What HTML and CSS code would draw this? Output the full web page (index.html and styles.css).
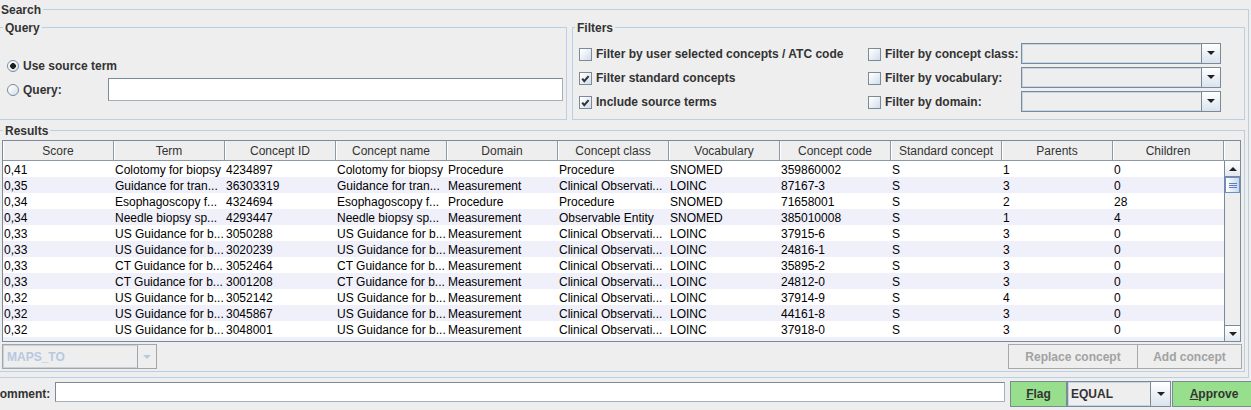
FILE: index.html
```html
<!DOCTYPE html>
<html>
<head>
<meta charset="utf-8">
<title>Search</title>
<link rel="stylesheet" href="styles.css">
</head>
<body>
<div class="search titled">
  <span class="title">Search</span>
  <div class="top-row">
    <div class="query titled">
      <span class="title">Query</span>
      <div class="query-grid">
        <div class="opt"><span class="radio on"></span>Use source term</div>
        <div></div>
        <div class="opt"><span class="radio"></span>Query:</div>
        <div class="textfield"></div>
      </div>
    </div>
    <div class="filters titled">
      <span class="title">Filters</span>
      <div class="filter-grid">
        <div class="opt"><span class="check"></span>Filter by user selected concepts / ATC code</div>
        <div class="opt"><span class="check"></span>Filter by concept class:</div>
        <div class="combo"><div class="combo-field"></div><div class="combo-btn"><i class="tri"></i></div></div>

        <div class="opt"><span class="check"><svg viewBox="0 0 11 11" width="11" height="11"><path d="M2.2 5.6 L4.3 8.2 L8.6 3.2" fill="none" stroke="#333" stroke-width="2"/></svg></span>Filter standard concepts</div>
        <div class="opt"><span class="check"></span>Filter by vocabulary:</div>
        <div class="combo"><div class="combo-field"></div><div class="combo-btn"><i class="tri"></i></div></div>

        <div class="opt"><span class="check"><svg viewBox="0 0 11 11" width="11" height="11"><path d="M2.2 5.6 L4.3 8.2 L8.6 3.2" fill="none" stroke="#333" stroke-width="2"/></svg></span>Include source terms</div>
        <div class="opt"><span class="check"></span>Filter by domain:</div>
        <div class="combo"><div class="combo-field"></div><div class="combo-btn"><i class="tri"></i></div></div>
      </div>
    </div>
  </div>

  <div class="results titled">
    <span class="title">Results</span>
    <div class="table">
      <div class="thead">
        <div class="th">Score</div><div class="th">Term</div><div class="th">Concept ID</div><div class="th">Concept name</div><div class="th">Domain</div><div class="th">Concept class</div><div class="th">Vocabulary</div><div class="th">Concept code</div><div class="th">Standard concept</div><div class="th">Parents</div><div class="th">Children</div><div class="th corner"></div>
      </div>
      <div class="tbody">
        <div class="rows">
          <div class="row"><span>0,41</span><span>Colotomy for biopsy</span><span>4234897</span><span>Colotomy for biopsy</span><span>Procedure</span><span>Procedure</span><span>SNOMED</span><span>359860002</span><span>S</span><span>1</span><span>0</span></div>
          <div class="row"><span>0,35</span><span>Guidance for tran...</span><span>36303319</span><span>Guidance for tran...</span><span>Measurement</span><span>Clinical Observati...</span><span>LOINC</span><span>87167-3</span><span>S</span><span>3</span><span>0</span></div>
          <div class="row"><span>0,34</span><span>Esophagoscopy f...</span><span>4324694</span><span>Esophagoscopy f...</span><span>Procedure</span><span>Procedure</span><span>SNOMED</span><span>71658001</span><span>S</span><span>2</span><span>28</span></div>
          <div class="row"><span>0,34</span><span>Needle biopsy sp...</span><span>4293447</span><span>Needle biopsy sp...</span><span>Measurement</span><span>Observable Entity</span><span>SNOMED</span><span>385010008</span><span>S</span><span>1</span><span>4</span></div>
          <div class="row"><span>0,33</span><span>US Guidance for b...</span><span>3050288</span><span>US Guidance for b...</span><span>Measurement</span><span>Clinical Observati...</span><span>LOINC</span><span>37915-6</span><span>S</span><span>3</span><span>0</span></div>
          <div class="row"><span>0,33</span><span>US Guidance for b...</span><span>3020239</span><span>US Guidance for b...</span><span>Measurement</span><span>Clinical Observati...</span><span>LOINC</span><span>24816-1</span><span>S</span><span>3</span><span>0</span></div>
          <div class="row"><span>0,33</span><span>CT Guidance for b...</span><span>3052464</span><span>CT Guidance for b...</span><span>Measurement</span><span>Clinical Observati...</span><span>LOINC</span><span>35895-2</span><span>S</span><span>3</span><span>0</span></div>
          <div class="row"><span>0,33</span><span>CT Guidance for b...</span><span>3001208</span><span>CT Guidance for b...</span><span>Measurement</span><span>Clinical Observati...</span><span>LOINC</span><span>24812-0</span><span>S</span><span>3</span><span>0</span></div>
          <div class="row"><span>0,32</span><span>US Guidance for b...</span><span>3052142</span><span>US Guidance for b...</span><span>Measurement</span><span>Clinical Observati...</span><span>LOINC</span><span>37914-9</span><span>S</span><span>4</span><span>0</span></div>
          <div class="row"><span>0,32</span><span>US Guidance for b...</span><span>3045867</span><span>US Guidance for b...</span><span>Measurement</span><span>Clinical Observati...</span><span>LOINC</span><span>44161-8</span><span>S</span><span>3</span><span>0</span></div>
          <div class="row"><span>0,32</span><span>US Guidance for b...</span><span>3048001</span><span>US Guidance for b...</span><span>Measurement</span><span>Clinical Observati...</span><span>LOINC</span><span>37918-0</span><span>S</span><span>3</span><span>0</span></div>
          <div class="row partial"></div>
        </div>
        <div class="vscroll">
          <div class="sb-btn up"><i class="tri-up"></i></div>
          <div class="sb-thumb"><i></i><i></i><i></i></div>
          <div class="sb-track"></div>
          <div class="sb-btn down"><i class="tri"></i></div>
        </div>
      </div>
    </div>
    <div class="controls">
      <div class="combo disabled"><div class="combo-field">MAPS_TO</div><div class="combo-btn"><i class="tri"></i></div></div>
      <div class="spacer"></div>
      <div class="btn disabled replace">Replace concept</div>
      <div class="btn disabled add">Add concept</div>
    </div>
  </div>
</div>

<div class="bottom">
  <span class="label">Comment:</span>
  <div class="textfield comment"></div>
  <div class="btn green flag"><u>F</u>lag</div>
  <div class="combo equal"><div class="combo-field">EQUAL</div><div class="combo-btn"><i class="tri"></i></div></div>
  <div class="btn green approve"><u>A</u>pprove</div>
</div>
</body>
</html>
```

FILE: styles.css
```css
* { box-sizing: border-box; }

html, body { margin: 0; padding: 0; }

body {
  width: 1251px;
  height: 410px;
  overflow: hidden;
  background: #eeeeee;
  font-family: "Liberation Sans", Arial, sans-serif;
  font-size: 12px;
  color: #333333;
}

/* titled borders */
.titled {
  position: relative;
  border: 1px solid #b8cfe5;
}
.titled > .title {
  position: absolute;
  top: -8px;
  left: 3px;
  padding: 0 2px;
  background: #eeeeee;
  font-weight: bold;
  line-height: 16px;
  color: #333333;
  white-space: nowrap;
}

.search {
  margin: 9px 2px 0 -4px;
  padding: 17px 3px 5px 2px;
}
.search > .title { left: 2px; }

.top-row {
  display: flex;
  gap: 5px;
  height: 93px;
}
.query { width: 568px; }
.filters { flex: 1; }
.filters > .title { left: 2px; }

.opt {
  display: flex;
  align-items: center;
  gap: 4px;
  font-weight: bold;
  white-space: nowrap;
}

.query-grid {
  display: grid;
  grid-template-columns: 101px 1fr;
  grid-auto-rows: 24px;
  align-items: center;
  padding: 26px 3px 0 7px;
}
.query-grid .textfield { margin-top: -2px; }

.filter-grid {
  display: grid;
  grid-template-columns: 289px 153px 200px;
  grid-auto-rows: 24px;
  align-items: center;
  padding: 14px 0 0 6px;
}
.filter-grid .combo { margin-top: -2px; }

.radio {
  width: 12px;
  height: 12px;
  border-radius: 50%;
  border: 1px solid #7a8a99;
  background: linear-gradient(135deg, #ffffff 10%, #d7e2ee 90%);
  flex: none;
}
.radio.on {
  background: radial-gradient(circle, #1e1e1e 0 2.6px, transparent 3.1px), linear-gradient(135deg, #ffffff 10%, #d7e2ee 90%);
}

.check {
  width: 13px;
  height: 13px;
  border: 1px solid #7a8a99;
  background: linear-gradient(135deg, #ffffff 10%, #d5e0ed 90%);
  flex: none;
  display: block;
}
.check svg { display: block; }

.textfield {
  height: 23px;
  background: #ffffff;
  border: 1px solid #7a8a99;
  border-right-color: #a6b0bb;
  border-bottom-color: #a6b0bb;
}

/* combo boxes */
.combo {
  display: flex;
  height: 21px;
  border: 1px solid #7a8a99;
  background: #eeeeee;
}
.combo-field {
  flex: 1;
  border: 1px solid #c4d4e4;
  border-right-color: #eeeeee;
  padding: 1px 2px 0;
  display: flex;
  align-items: center;
  font-weight: bold;
  color: #333333;
  white-space: nowrap;
}
.combo-btn {
  width: 19px;
  flex: none;
  border-left: 1px solid #7a8a99;
  background: linear-gradient(#ffffff, #d9e3ee);
  display: flex;
  align-items: center;
  justify-content: center;
}
.tri {
  display: block;
  width: 0;
  height: 0;
  border-left: 4px solid transparent;
  border-right: 4px solid transparent;
  border-top: 4px solid #222222;
}
.tri-up {
  display: block;
  width: 0;
  height: 0;
  border-left: 4px solid transparent;
  border-right: 4px solid transparent;
  border-bottom: 4px solid #222222;
}

/* results */
.results {
  margin-top: 10px;
  height: 242px;
  padding: 9px 3px 2px 2px;
}

.table {
  width: 1239px;
  height: 202px;
  border: 1px solid #7a8a99;
  background: #ffffff;
  display: flex;
  flex-direction: column;
  overflow: hidden;
}
.thead {
  display: flex;
  height: 20px;
  flex: none;
}
.th {
  width: 111px;
  flex: none;
  height: 20px;
  line-height: 19px;
  padding-top: 1px;
  text-align: center;
  background: #eeeeee;
  border-right: 1px solid #8c99a6;
  border-bottom: 1px solid #8c99a6;
  box-shadow: inset 1px 0 #ffffff;
  color: #333333;
  white-space: nowrap;
  overflow: hidden;
}
.th.corner {
  width: 16px;
  border-right: none;
}

.tbody {
  display: flex;
  height: 180px;
  flex: none;
  overflow: hidden;
}
.rows {
  width: 1221px;
  height: 180px;
  flex: none;
  overflow: hidden;
}
.row {
  display: grid;
  grid-template-columns: repeat(11, 111px);
  height: 16px;
  line-height: 16px;
  color: #000000;
  background: #ffffff;
}
.row:nth-child(even) { background: #f0f0fa; }
.row span {
  padding: 1px 0 0 1px;
  white-space: nowrap;
  overflow: hidden;
}

.vscroll {
  width: 16px;
  flex: none;
  display: flex;
  flex-direction: column;
  background: #eeeeee;
  border-left: 1px solid #7a8a99;
}
.sb-btn {
  height: 16px;
  flex: none;
  background: linear-gradient(#ffffff, #e2e9f1);
  display: flex;
  align-items: center;
  justify-content: center;
}
.sb-btn.up { border-bottom: 1px solid #7a8a99; }
.sb-btn.down { border-top: 1px solid #7a8a99; }
.sb-thumb {
  height: 16px;
  flex: none;
  border: 1px solid #6e8fc6;
  background: linear-gradient(90deg, #ffffff, #c6d8ee);
  display: flex;
  flex-direction: column;
  align-items: center;
  justify-content: center;
  gap: 1px;
}
.sb-thumb i {
  display: block;
  width: 8px;
  height: 1px;
  background: #5b7fc0;
}
.sb-track { flex: 1; }

.controls {
  display: flex;
  margin-top: 2px;
  height: 25px;
}
.controls .combo {
  width: 155px;
  height: 25px;
}
.combo.disabled { border-color: #a0a6ad; }
.combo.disabled .combo-field {
  color: #b5c9df;
  border-color: #c9d0d8;
  border-right-color: #eeeeee;
  padding-left: 3px;
}
.combo.disabled .combo-btn {
  background: #eeeeee;
  border-left-color: #a0a6ad;
}
.combo.disabled .tri { border-top-color: #b5c9df; }

.spacer { flex: 1; }

.btn {
  height: 25px;
  padding-top: 1px;
  display: flex;
  align-items: center;
  justify-content: center;
  font-weight: bold;
  white-space: nowrap;
  border: 1px solid #7a8a99;
}
.btn.disabled {
  background: #eeeeee;
  color: #a2a2a2;
  border-color: #a8a8a8;
}
.btn.replace { width: 130px; }
.btn.add { width: 105px; margin-left: -1px; margin-right: -1px; }

/* bottom row */
.bottom {
  display: flex;
  align-items: center;
  height: 26px;
  margin: 3px -5px 0 -9px;
}
.label {
  font-weight: bold;
  white-space: nowrap;
  color: #333333;
}
.textfield.comment {
  flex: 1;
  height: 20px;
  margin-left: 5px;
  align-self: flex-start;
  margin-top: 1px;
}
.btn.green {
  height: 26px;
  padding-top: 0;
  padding-bottom: 1px;
  background: #97df8d;
  color: #333333;
}
.btn.flag { width: 57px; margin-left: 5px; }
.combo.equal {
  width: 104px;
  height: 26px;
}
.combo.equal .combo-field { padding: 0 2px 1px; }
.combo.equal .combo-btn { width: 20px; }
.btn.approve { width: 84px; margin-left: 1px; }
```
